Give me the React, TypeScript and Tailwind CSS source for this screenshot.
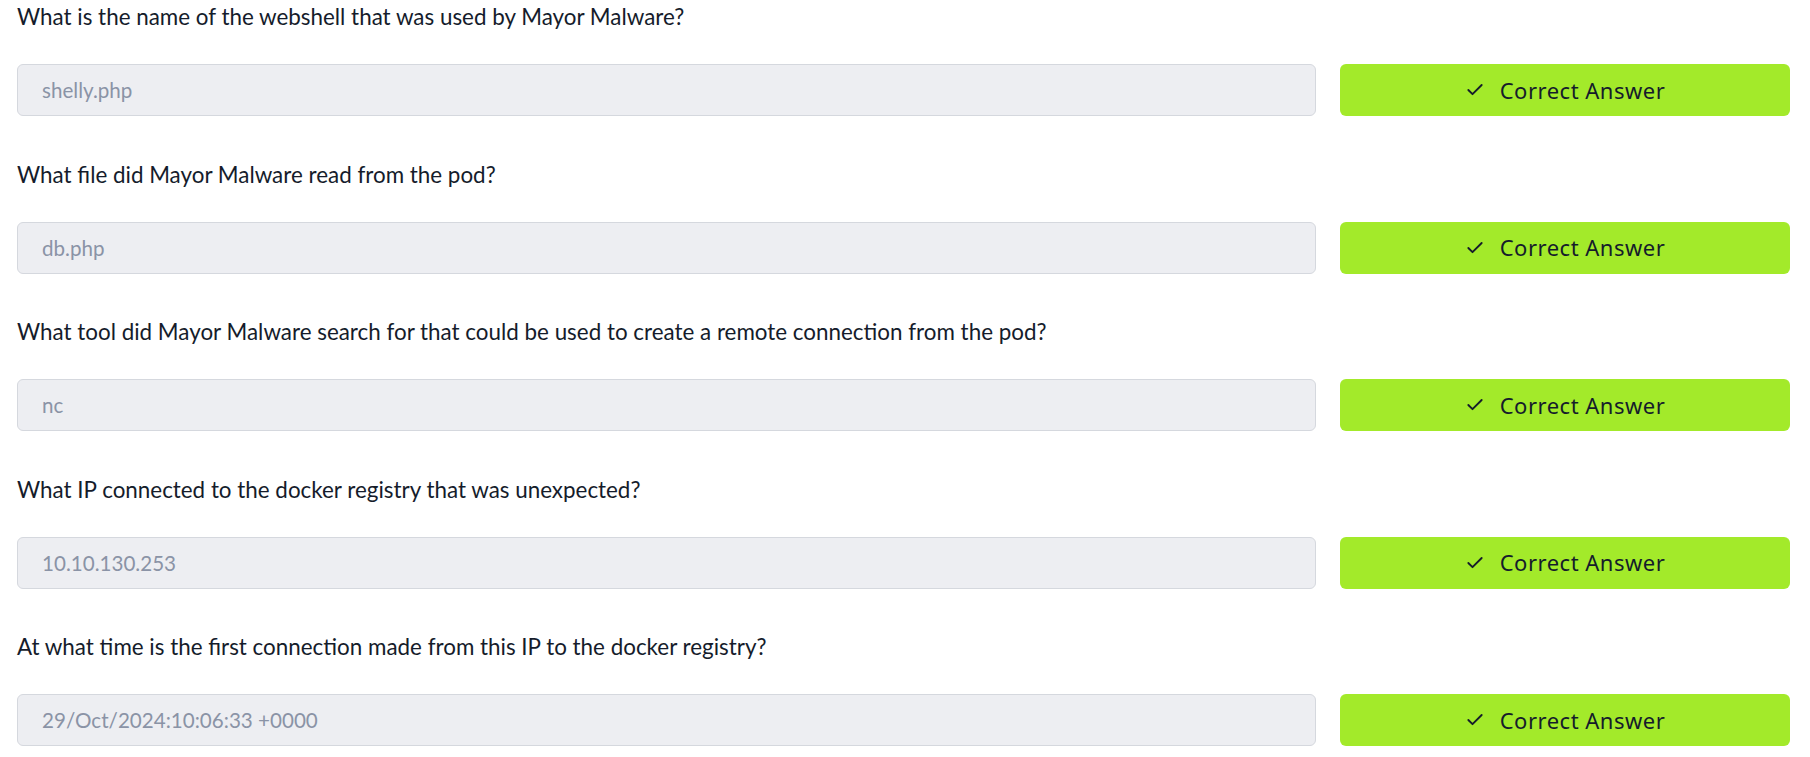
import React from 'react';
import { Check } from 'lucide-react';

interface Question {
  question: string;
  answer: string;
}

const questions: Question[] = [
  { question: 'What is the name of the webshell that was used by Mayor Malware?', answer: 'shelly.php' },
  { question: 'What file did Mayor Malware read from the pod?', answer: 'db.php' },
  {
    question: 'What tool did Mayor Malware search for that could be used to create a remote connection from the pod?',
    answer: 'nc',
  },
  { question: 'What IP connected to the docker registry that was unexpected?', answer: '10.10.130.253' },
  { question: 'At what time is the first connection made from this IP to the docker registry?', answer: '29/Oct/2024:10:06:33 +0000' },
];

const QuestionRow: React.FC<{ item: Question }> = ({ item }) => {
  return (
    <div className="flex flex-col">
      <p className="text-[22.4px] leading-[30px] text-[#151c2b]">{item.question}</p>
      <div className="mt-[32px] flex gap-[24px]">
        <input
          readOnly
          value={item.answer}
          className="h-[52px] flex-1 rounded-md border border-[#d5d8de] bg-[#edeef2] px-[24px] text-[20.6px] text-[#8a93a6] outline-none"
        />
        <button className="flex h-[52px] w-[450px] items-center justify-center gap-[15px] rounded-md bg-[#a3ea2a] text-[22px] tracking-[0.5px] text-[#151c2b] font-['Noto_Sans',sans-serif]">
          <Check className="h-5 w-5" strokeWidth={2.25} />
          <span>Correct Answer</span>
        </button>
      </div>
    </div>
  );
};

export default function App() {
  return (
    <div className="min-h-screen bg-white pl-[17px] pr-[20px] pt-[2px] font-['Lato',sans-serif]">
      <div className="flex flex-col gap-[43.5px]">
        {questions.map((q, i) => (
          <QuestionRow key={i} item={q} />
        ))}
      </div>
    </div>
  );
}
